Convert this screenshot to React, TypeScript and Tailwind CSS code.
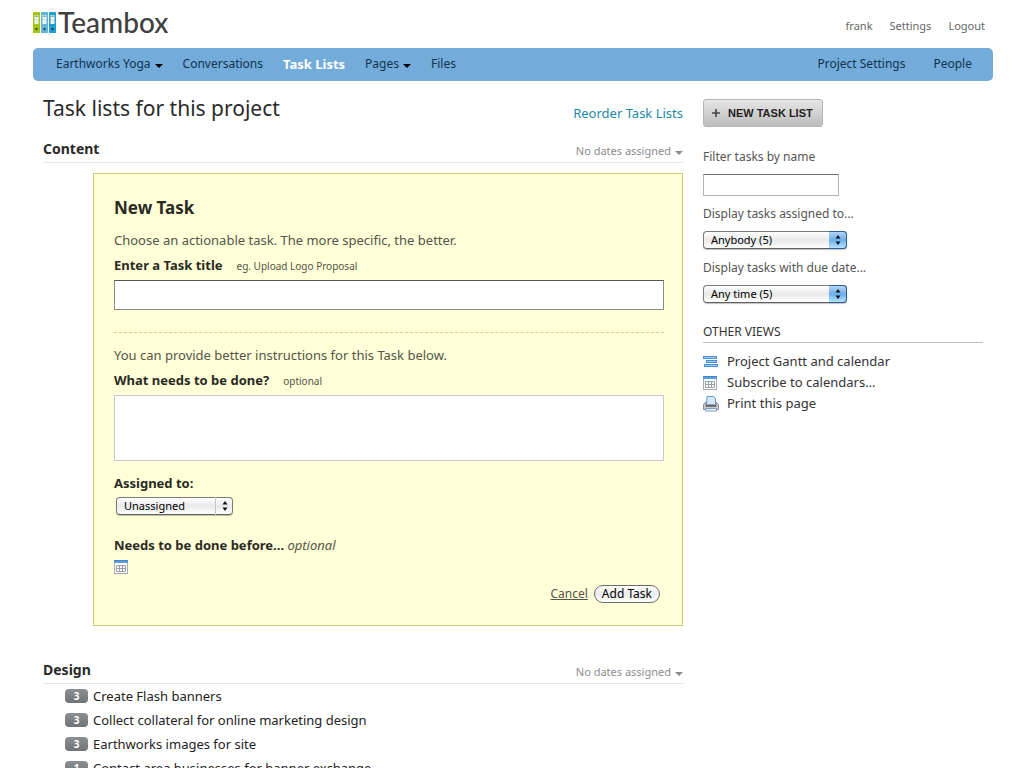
import React, { useId } from "react";

type NavItem = { label: string; menu?: boolean; active?: boolean };

const leftNav: NavItem[] = [
  { label: "Earthworks Yoga", menu: true },
  { label: "Conversations" },
  { label: "Task Lists", active: true },
  { label: "Pages", menu: true },
  { label: "Files" },
];

const designTasks = [
  { count: 3, title: "Create Flash banners" },
  { count: 3, title: "Collect collateral for online marketing design" },
  { count: 3, title: "Earthworks images for site" },
  { count: 1, title: "Contact area businesses for banner exchange" },
];

function Caret({ className }: { className?: string }) {
  return (
    <svg viewBox="0 0 8 4" className={`h-1 w-2 shrink-0 fill-current ${className ?? ""}`} aria-hidden="true">
      <path d="M0 0h8L4 4z" />
    </svg>
  );
}

function Binder({ x, fill, dark }: { x: number; fill: string; dark: string }) {
  return (
    <g>
      <rect x={x} y="0" width="7" height="21" rx="0.5" fill={fill} />
      <rect x={x + 1.5} y="3" width="4" height="9" rx="0.6" fill="#eef4ee" />
      <path d={`M${x + 2} 4.500q1.500-2 3 0z`} fill={dark} />
      <rect x={x + 2.2} y="7.500" width="2.600" height="1" fill="#cfd8d6" />
      <circle cx={x + 3.5} cy="17" r="1.2" fill={dark} />
    </g>
  );
}

function Logo() {
  return (
    <a href="#" className="flex items-center gap-0.5 pb-1 text-[#404040]">
      <svg viewBox="0 0 23 21" className="h-[21px] w-[23px]" aria-hidden="true">
        <Binder x={0} fill="#a3c614" dark="#3f5208" />
        <Binder x={8} fill="#62b5d3" dark="#1c4e63" />
        <Binder x={16} fill="#1f9fd0" dark="#0b4560" />
      </svg>
      <span className="[font-family:Lato,sans-serif] text-[28px] leading-8 font-medium">Teambox</span>
    </a>
  );
}

function CalendarIcon() {
  return (
    <svg viewBox="0 0 14 14" className="size-3.5 shrink-0" aria-hidden="true">
      <rect x="0.5" y="0.5" width="13" height="13" fill="#fff" stroke="#a3adb8" />
      <rect x="0" y="0" width="14" height="3" fill="#5b9fde" />
      <rect x="0" y="0" width="14" height="1" fill="#3f86cd" />
      <path d="M2.500 5.500h9v6h-9zM2.500 8.500h9M5.500 5.500v6M8.500 5.500v6" fill="none" stroke="#9aa0a8" />
    </svg>
  );
}

function GanttIcon() {
  return (
    <svg viewBox="0 0 15 12" className="h-3 w-[15px] shrink-0" aria-hidden="true">
      <g fill="#9ccaf3" stroke="#4a8fd3">
        <rect x="0.5" y="0.5" width="13" height="2" />
        <rect x="3.5" y="4.5" width="10" height="2" />
        <rect x="1.5" y="8.500" width="13" height="2" />
      </g>
    </svg>
  );
}

function PrinterIcon() {
  return (
    <svg viewBox="0 0 16 16" className="size-4 shrink-0" aria-hidden="true">
      <path d="M4 .5h6.500l2 2.500v6h-9z" fill="#d5e9fb" stroke="#5f9ad6" />
      <path d="M.5 8.500 3 6v3h10V6l2.500 2.500v5H.5z" fill="#c9ccd0" stroke="#858b92" />
      <path d="M2.500 10h11" stroke="#4b5056" strokeWidth="1.400" />
      <path d="M2.500 12.500h11v2.500h-11z" fill="#e6f1fb" stroke="#7c9dbd" />
    </svg>
  );
}

function MacSelect({ id, value, blue, className }: { id: string; value: string; blue?: boolean; className: string }) {
  return (
    <div className={`relative h-[18px] ${className}`}>
      <select
        id={id}
        className="block size-full appearance-none rounded-[4px] border border-[#7b7b7b] border-b-[#5f5f5f] bg-linear-to-b from-white via-[#e9e9e9] to-white pl-[7px] text-[11px] leading-4 text-black shadow-[0_1px_1px_rgba(0,0,0,0.25)]"
      >
        <option>{value}</option>
      </select>
      <span
        className={`pointer-events-none absolute inset-y-0 right-0 flex w-[18px] items-center justify-center ${
          blue
            ? "rounded-r-[4px] border border-l-0 border-[#2f5f9f] bg-linear-to-b from-[#b5d5f5] via-[#69aeee] to-[#b5e2ff]"
            : "border-l border-[#c5c5c5]"
        }`}
      >
        <svg viewBox="0 0 6 10" className="h-2.5 w-1.5" aria-hidden="true">
          <path d="M3 0l2.500 3.500h-5zM3 10L.5 6.500h5z" fill="#111" />
        </svg>
      </span>
    </div>
  );
}

function ListHeader({ title }: { title: string }) {
  return (
    <div className="flex h-[26px] items-start justify-between border-b border-[#e8e8e8]">
      <h2 className="text-[14px] leading-6 font-bold text-[#2a2a2a]">{title}</h2>
      <button type="button" className="flex items-center gap-1 pt-1.5 text-[11px] leading-4 text-[#8c8c8c]">
        No dates assigned
        <Caret className="mt-1" />
      </button>
    </div>
  );
}

function NewTaskForm() {
  const id = useId();
  return (
    <form
      className="mt-2.5 ml-[50px] border border-[#c8c878] bg-[#ffffd8] pt-5 pr-[18px] pb-[21px] pl-5 text-[13px] leading-5 text-[#55554a]"
      onSubmit={(e) => e.preventDefault()}
    >
      <h3 className="text-[17px] leading-7 font-bold text-[#2a2a24]">New Task</h3>
      <p className="mt-2">Choose an actionable task. The more specific, the better.</p>
      <div className="mt-[5px] flex items-baseline gap-3.5">
        <label htmlFor={`${id}-title`} className="font-bold text-[#2a2a24]">
          Enter a Task title
        </label>
        <span className="text-[10px]">eg. Upload Logo Proposal</span>
      </div>
      <input
        id={`${id}-title`}
        type="text"
        className="mt-1 block h-[30px] w-full border border-[#8c8c8c] border-t-[#555] bg-white px-2 text-black"
      />
      <hr className="mt-[22px] border-t border-dashed border-[#cfcfa0]" />
      <p className="mt-3">You can provide better instructions for this Task below.</p>
      <div className="mt-[5px] flex items-baseline gap-3.5">
        <label htmlFor={`${id}-body`} className="font-bold text-[#2a2a24]">
          What needs to be done?
        </label>
        <span className="text-[10px]">optional</span>
      </div>
      <textarea
        id={`${id}-body`}
        className="mt-1 block h-[66px] w-full resize-none border border-[#c9c9c9] bg-white px-2 text-black"
      />
      <label htmlFor={`${id}-who`} className="mt-3 block font-bold text-[#2a2a24]">
        Assigned to:
      </label>
      <MacSelect id={`${id}-who`} value="Unassigned" className="mt-1 ml-0.5 w-[117px]" />
      <div className="mt-5">
        <span className="font-bold text-[#2a2a24]">Needs to be done before...</span> <em>optional</em>
      </div>
      <button type="button" aria-label="Pick a due date" className="mt-[5px] block">
        <CalendarIcon />
      </button>
      <div className="mt-2.5 flex items-center justify-end gap-1.5 pr-1">
        <a href="#" className="text-[12px] underline">
          Cancel
        </a>
        <button
          type="submit"
          className="h-[18px] rounded-full border border-[#6c6c6c] bg-linear-to-b from-white via-[#ececec] to-white px-[7px] text-[12px] leading-4 text-black"
        >
          Add Task
        </button>
      </div>
    </form>
  );
}

function SideLink({ icon, label }: { icon: React.ReactNode; label: string }) {
  return (
    <li>
      <a href="#" className="flex items-center gap-2">
        <span className="flex w-4">{icon}</span>
        {label}
      </a>
    </li>
  );
}

function Sidebar() {
  const id = useId();
  return (
    <aside className="w-[280px] shrink-0 pt-[18px] text-[12px] leading-5 text-[#555]">
      <button
        type="button"
        className="flex h-7 w-[120px] items-center gap-2 rounded-[3px] border border-[#b4b4b4] bg-linear-to-b from-[#e6e6e6] to-[#bcbcbc] pl-2 font-['Liberation_Sans',Arial,sans-serif] text-[11px] font-bold text-[#222]"
      >
        <svg viewBox="0 0 8 8" className="size-2 shrink-0" aria-hidden="true">
          <path d="M4 0v8M0 4h8" stroke="#444" strokeWidth="1.600" />
        </svg>
        NEW TASK LIST
      </button>
      <label htmlFor={`${id}-name`} className="mt-5 block">
        Filter tasks by name
      </label>
      <input
        id={`${id}-name`}
        type="text"
        className="mt-[7px] block h-[22px] w-[136px] border border-[#b5b5b5] border-t-[#707070] bg-white px-1"
      />
      <label htmlFor={`${id}-who`} className="mt-2 block">
        Display tasks assigned to...
      </label>
      <MacSelect id={`${id}-who`} value="Anybody (5)" blue className="mt-[7px] w-36" />
      <label htmlFor={`${id}-when`} className="mt-[9px] block">
        Display tasks with due date...
      </label>
      <MacSelect id={`${id}-when`} value="Any time (5)" blue className="mt-[7px] w-36" />
      <h2 className="mt-[18px] border-b border-[#bdbdbd] text-[12px] leading-[21px] text-[#333]">OTHER VIEWS</h2>
      <ul className="mt-2 text-[13px] leading-[21px] text-[#333]">
        <SideLink icon={<GanttIcon />} label="Project Gantt and calendar" />
        <SideLink icon={<CalendarIcon />} label="Subscribe to calendars..." />
        <SideLink icon={<PrinterIcon />} label="Print this page" />
      </ul>
    </aside>
  );
}

export default function App() {
  return (
    <div className="mx-auto max-w-[1024px] bg-white pr-[31px] pl-[33px] font-['Noto_Sans','Lucida_Grande',sans-serif]">
      <header className="flex h-12 items-center justify-between pr-2">
        <Logo />
        <nav aria-label="Account" className="flex gap-[17px] pt-1 text-[11px] leading-4 text-[#666]">
          <a href="#">frank</a>
          <a href="#">Settings</a>
          <a href="#">Logout</a>
        </nav>
      </header>

      <nav
        aria-label="Project"
        className="flex h-[33px] items-center justify-between rounded-[5px] bg-[#73abda] pr-[21px] pb-0.5 pl-[23px] text-[12px] leading-5 text-[#12344f]"
      >
        <ul className="flex gap-5">
          {leftNav.map((item) => (
            <li key={item.label}>
              <a href="#" className={`flex items-center gap-1 ${item.active ? "text-[13px] font-bold text-white" : ""}`}>
                {item.label}
                {item.menu && <Caret className="mt-1 text-black" />}
              </a>
            </li>
          ))}
        </ul>
        <ul className="flex gap-7">
          <li>
            <a href="#">Project Settings</a>
          </li>
          <li>
            <a href="#">People</a>
          </li>
        </ul>
      </nav>

      <div className="flex gap-5 px-2.5">
        <main className="min-w-0 flex-1">
          <div className="flex h-14 items-center justify-between">
            <h1 className="pb-0.5 text-[21px] leading-7 text-[#2a2a2a]">Task lists for this project</h1>
            <a href="#" className="pt-2 text-[13px] leading-5 text-[#1c8aa5]">
              Reorder Task Lists
            </a>
          </div>
          <section>
            <ListHeader title="Content" />
            <NewTaskForm />
          </section>
          <section className="mt-8">
            <ListHeader title="Design" />
            <ul className="text-[13px] leading-6 text-[#222]">
              {designTasks.map((task) => (
                <li key={task.title} className="flex items-center gap-[5px] pl-[22px]">
                  <span className="flex h-3.5 w-[23px] items-center justify-center rounded-[4px] bg-linear-to-b from-[#8b9094] to-[#6f7478] text-[10px] font-bold text-white">
                    {task.count}
                  </span>
                  <a href="#">{task.title}</a>
                </li>
              ))}
            </ul>
          </section>
        </main>
        <Sidebar />
      </div>
    </div>
  );
}
